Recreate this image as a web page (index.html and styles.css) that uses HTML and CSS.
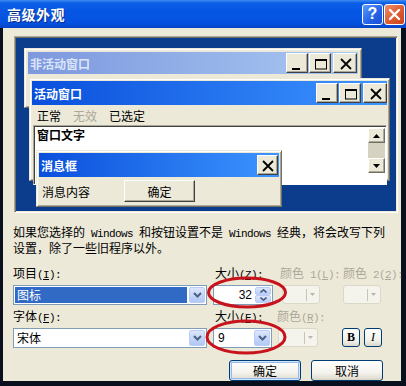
FILE: index.html
```html
<!DOCTYPE html>
<html lang="zh-CN">
<head>
<meta charset="utf-8">
<title>高级外观</title>
<link rel="stylesheet" href="styles.css">
</head>
<body>
<div class="win">
  <div class="titlebar">
    <span class="title">高级外观</span>
    <div class="tb-btns">
      <span class="tb-btn help">?</span>
      <span class="tb-btn close"><svg width="13" height="13" viewBox="0 0 13 13"><path d="M2 2L11 11M11 2L2 11" stroke="#fff" stroke-width="2.4" stroke-linecap="round"/></svg></span>
    </div>
  </div>
  <div class="client">
    <div class="preview">
      <div class="pwin inactive">
        <div class="cap">
          <span class="cap-t">非活动窗口</span>
          <div class="cbtns">
            <span class="cb"><svg width="12" height="12" viewBox="0 0 12 12"><rect x="0" y="10" width="8" height="2"/></svg></span>
            <span class="cb mx"><svg width="12" height="12" viewBox="0 0 12 12"><rect x="0.5" y="1.5" width="11" height="9.5" fill="none" stroke="#000"/><rect x="0" y="1" width="12" height="2"/></svg></span>
            <span class="cb cl"><svg width="12" height="12" viewBox="0 0 12 12"><path d="M1 1L11 11M11 1L1 11" stroke="#000" stroke-width="1.8"/></svg></span>
          </div>
        </div>
      </div>
      <div class="pwin active">
        <div class="cap">
          <span class="cap-t">活动窗口</span>
          <div class="cbtns">
            <span class="cb"><svg width="12" height="12" viewBox="0 0 12 12"><rect x="0" y="10" width="8" height="2"/></svg></span>
            <span class="cb mx"><svg width="12" height="12" viewBox="0 0 12 12"><rect x="0.5" y="1.5" width="11" height="9.5" fill="none" stroke="#000"/><rect x="0" y="1" width="12" height="2"/></svg></span>
            <span class="cb cl"><svg width="12" height="12" viewBox="0 0 12 12"><path d="M1 1L11 11M11 1L1 11" stroke="#000" stroke-width="1.8"/></svg></span>
          </div>
        </div>
        <div class="menu">
          <span>正常</span><span class="dis">无效</span><span>已选定</span>
        </div>
        <div class="textarea">
          <div class="wtext">窗口文字</div>
          <div class="sbar">
            <span class="sb-btn"><svg width="7" height="4" viewBox="0 0 7 4"><path d="M3.5 0L7 4H0Z"/></svg></span>
            <span class="sb-thumb"></span>
            <span class="sb-btn"><svg width="7" height="4" viewBox="0 0 7 4"><path d="M0 0H7L3.5 4Z"/></svg></span>
          </div>
        </div>
      </div>
      <div class="pwin msgbox">
        <div class="cap">
          <span class="cap-t">消息框</span>
          <div class="cbtns">
            <span class="cb cl"><svg width="12" height="12" viewBox="0 0 12 12"><path d="M1 1L11 11M11 1L1 11" stroke="#000" stroke-width="1.8"/></svg></span>
          </div>
        </div>
        <div class="msgbody">
          <span>消息内容</span>
          <span class="okbtn">确定</span>
        </div>
      </div>
    </div>

    <p class="note">如果您选择的<span class="m"> Windows </span>和按钮设置不是<span class="m"> Windows </span>经典，将会改写下列<br>设置，除了一些旧程序以外。</p>

    <div class="opts">
      <span class="lbl">项目<span class="m">(<u>I</u>):</span></span>
      <span class="lbl l2">大小<span class="m">(<u>Z</u>):</span></span>
      <span class="lbl dim">颜色<span class="m"> 1(<u>L</u>):</span></span>
      <span class="lbl dim">颜色<span class="m"> 2(<u>2</u>):</span></span>

      <div class="combo big">
        <span class="val sel">图标</span>
        <span class="dd"><svg width="9" height="6" viewBox="0 0 9 6"><path d="M1 1L4.5 4.5L8 1" fill="none" stroke="#4d6185" stroke-width="2"/></svg></span>
      </div>
      <div class="combo spin">
        <span class="val num">32</span>
        <span class="ud">
          <span class="udb"><svg width="7" height="4" viewBox="0 0 7 4"><path d="M0.5 3.5L3.5 0.8L6.5 3.5" fill="none" stroke="#4d6185" stroke-width="1.6"/></svg></span>
          <span class="udb"><svg width="7" height="4" viewBox="0 0 7 4"><path d="M0.5 0.5L3.5 3.2L6.5 0.5" fill="none" stroke="#4d6185" stroke-width="1.6"/></svg></span>
        </span>
      </div>
      <div class="cbtn c1"><span class="sep"></span><svg width="5" height="3" viewBox="0 0 5 3"><path d="M0 0H5L2.5 3Z" fill="#b9b6a8"/></svg></div>
      <div class="cbtn"><span class="sep"></span><svg width="5" height="3" viewBox="0 0 5 3"><path d="M0 0H5L2.5 3Z" fill="#b9b6a8"/></svg></div>

      <span class="lbl">字体<span class="m">(<u>F</u>):</span></span>
      <span class="lbl l2">大小<span class="m">(<u>E</u>):</span></span>
      <span class="lbl dim l3">颜色<span class="m">(<u>R</u>):</span></span>
      <span></span>

      <div class="combo big">
        <span class="val">宋体</span>
        <span class="dd"><svg width="9" height="6" viewBox="0 0 9 6"><path d="M1 1L4.5 4.5L8 1" fill="none" stroke="#4d6185" stroke-width="2"/></svg></span>
      </div>
      <div class="combo small">
        <span class="val">9</span>
        <span class="dd"><svg width="9" height="6" viewBox="0 0 9 6"><path d="M1 1L4.5 4.5L8 1" fill="none" stroke="#4d6185" stroke-width="2"/></svg></span>
      </div>
      <div class="cbtn c3"><span class="sep"></span><svg width="5" height="3" viewBox="0 0 5 3"><path d="M0 0H5L2.5 3Z" fill="#b9b6a8"/></svg></div>
      <div class="fbtns">
        <span class="fbtn b">B</span>
        <span class="fbtn i">I</span>
      </div>
    </div>

    <div class="actions">
      <span class="xpbtn def">确定</span>
      <span class="xpbtn">取消</span>
    </div>

    <svg class="marks" width="398" height="353" viewBox="0 0 398 353">
      <ellipse cx="244" cy="264.5" rx="38.5" ry="14.5" fill="none" stroke="#c8121c" stroke-width="3"/>
      <ellipse cx="243" cy="309" rx="39" ry="16" fill="none" stroke="#c8121c" stroke-width="3"/>
    </svg>
  </div>
</div>
</body>
</html>
```

FILE: styles.css
```css
* { box-sizing: border-box; }
html, body { margin: 0; padding: 0; }
body {
  width: 406px;
  height: 386px;
  overflow: hidden;
  background: #0a0f1e;
  font: 12px/13px "Noto Sans CJK SC", "Liberation Sans", sans-serif;
  color: #000;
}
.m {
  font-family: "Liberation Mono", monospace;
  font-size: 11px;
  letter-spacing: -0.6px;
  white-space: pre;
}
.win { width: 406px; height: 386px; display: flex; flex-direction: column; }

/* title bar */
.titlebar {
  height: 28px;
  flex: none;
  display: flex;
  align-items: center;
  padding-left: 7px;
  background: linear-gradient(180deg, #3f8cf3 0, #0c5fe6 3px, #0656e4 40%, #0552e0 80%, #0744c6 100%);
}
.title {
  color: #fff;
  font-weight: bold;
  font-size: 14px;
  letter-spacing: 0.5px;
  text-shadow: 1px 1px 0 #0a2d8a;
}
.tb-btns { margin-left: auto; display: flex; gap: 1px; padding-right: 1px; }
.tb-btn {
  width: 21px; height: 21px;
  border: 1px solid #fff;
  border-radius: 3px;
  display: flex; align-items: center; justify-content: center;
  color: #fff;
  font: bold 16px/1 "Liberation Sans", sans-serif;
}
.tb-btn.help { background: linear-gradient(135deg, #5d9cf8, #2460e6 60%, #1d4fd0); }
.tb-btn.close { background: linear-gradient(135deg, #f0906c, #dd5a2e 55%, #c8411c); }

/* client */
.client {
  position: relative;
  flex: 1;
  background: #ece9d8;
  border-left: 3px solid #0a0f1e;
  border-right: 5px solid #0a0f1e;
  border-bottom: 5px solid #0a0f1e;
}

/* preview */
.preview {
  position: relative;
  margin: 8px 0 0 11px;
  width: 384px;
  height: 177px;
  background: #0b3d8c;
  border: 1px solid;
  border-color: #aca899 #fff #fff #aca899;
  box-shadow: inset 1px 1px 0 #716f64, inset -1px -1px 0 #ece9d8;
}
.pwin {
  position: absolute;
  background: #ece9d8;
  border: 1px solid;
  border-color: #ece9d8 #716f64 #716f64 #ece9d8;
  box-shadow: inset 1px 1px 0 #fff, inset -1px -1px 0 #aca899;
  padding: 2px;
}
.inactive { left: 9px; top: 11px; width: 338px; height: 60px; padding: 3px; }
.active { left: 14px; top: 41px; width: 361px; height: 103px; }
.msgbox { left: 21px; top: 113px; width: 246px; height: 57px; }

.cap {
  display: flex;
  align-items: center;
  padding-left: 2px;
  background: linear-gradient(90deg, #0a4fdc, #3d95ff);
  height: 24px;
}
.inactive .cap { height: 22px; padding-right: 1px; background: linear-gradient(90deg, #7d98de, #a9c8f2); }
.cap-t { color: #fff; font-weight: bold; font-size: 12px; }
.inactive .cap-t { color: #dbe5f7; }
.cbtns { margin-left: auto; display: flex; }
.cb {
  width: 22px; height: 20px;
  background: #ece9d8;
  border: 1px solid;
  border-color: #fff #404040 #404040 #fff;
  box-shadow: inset -1px -1px 0 #aca899;
  display: flex; align-items: center; justify-content: center;
  padding-left: 1px; padding-top: 1px;
}
.cb + .cb { margin-left: 1px; }
.cb.cl { width: 24px; }
.cb + .cb.cl { margin-left: 2px; }
.msgbox .cb.cl { width: 21px; margin-right: 1px; }

.menu {
  height: 20px;
  display: flex;
  align-items: center;
  gap: 12px;
  padding-left: 5px;
}
.menu .dis { color: #aca899; }
.textarea {
  display: flex;
  height: 60px;
  margin-left: 1px;
  background: #fff;
  border: 1px solid;
  border-color: #aca899 #fff #fff #aca899;
  box-shadow: inset 1px 1px 0 #404040;
  padding: 2px 1px 0 3px;
}
.wtext { flex: 1; font-weight: bold; font-size: 12px; }
.sbar { width: 17px; display: flex; flex-direction: column; align-self: flex-start; }
.sb-btn {
  height: 15px;
  background: #ece9d8;
  border: 1px solid;
  border-color: #fff #716f64 #716f64 #fff;
  box-shadow: inset -1px -1px 0 #aca899;
  display: flex; align-items: center; justify-content: center;
}
.sb-thumb { height: 15px; background: #d6d2c2; }

.msgbody {
  display: flex;
  align-items: center;
  height: 28px;
  padding-left: 3px;
}
.okbtn {
  margin-left: 34px;
  width: 71px; height: 22px;
  background: #ece9d8;
  border: 1px solid;
  border-color: #fff #404040 #404040 #fff;
  box-shadow: inset -1px -1px 0 #aca899;
  display: flex; align-items: center; justify-content: center;
}

/* note */
.note {
  margin: 12px 0 0 10px;
  line-height: 13px;
  white-space: nowrap;
}

/* options grid */
.opts {
  margin-top: 12px;
  padding-left: 10px;
  display: grid;
  grid-template-columns: 200px 67px 63px 1fr;
  grid-template-rows: 19px 24px 19px 20px;
  align-items: start;
}
.lbl { line-height: 13px; white-space: nowrap; }
.lbl.l2 { margin-left: 2px; }
.lbl.l3 { margin-left: -3px; }
.dim { color: #aca899; }

.combo {
  height: 20px;
  border: 1px solid #7f9db9;
  background: #fff;
  display: flex;
  align-items: center;
  padding: 1px;
}
.combo.big { width: 194px; }
.combo.spin { width: 60px; }
.combo.small { width: 59px; }
.val { flex: 1; height: 16px; line-height: 16px; padding-left: 2px; }
.sel { background: #316ac5; color: #fff; margin-right: 2px; }
.num { text-align: right; padding-right: 3px; font-family: "Liberation Sans", sans-serif; }
.small .val { font-family: "Liberation Sans", sans-serif; padding-left: 3px; }
.dd {
  width: 16px; height: 16px;
  border: 1px solid #b9cdf6;
  border-radius: 2px;
  background: linear-gradient(180deg, #dde7fc, #c0d3f8 60%, #b2c8f4);
  display: flex; align-items: center; justify-content: center;
}
.ud { width: 16px; height: 16px; display: flex; flex-direction: column; gap: 0; }
.udb {
  flex: 1;
  border: 1px solid #b9cdf6;
  border-radius: 2px;
  background: linear-gradient(180deg, #dde7fc, #b9cdf6);
  display: flex; align-items: center; justify-content: center;
}
.cbtn {
  width: 38px; height: 19px;
  margin-left: 2px;
  border: 1px solid #dcd8c8;
  border-radius: 3px;
  background: #f4f3ec;
  display: flex; align-items: center; justify-content: flex-end;
  gap: 3px;
  padding-right: 4px;
}
.cbtn.c1 { margin-left: 2px; }
.cbtn.c3 { margin-left: -2px; width: 40px; }
.opts > .cbtn:nth-child(8) { margin-left: 0; }
.sep { width: 1px; height: 12px; background: #c9c6b7; }
.fbtns { display: flex; gap: 4px; margin-left: -1px; }
.fbtn {
  width: 18px; height: 19px;
  border: 1px solid #003c74;
  border-radius: 3px;
  background: linear-gradient(180deg, #ffffff, #f1efe6 70%, #dcd8c9);
  display: flex; align-items: center; justify-content: center;
  font-family: "Liberation Serif", serif;
  font-size: 12px;
}
.fbtn.b { font-weight: bold; }
.fbtn.i { font-style: italic; }

/* actions */
.actions {
  margin-top: 12px;
  display: flex;
  justify-content: flex-end;
  gap: 10px;
  padding-right: 18px;
}
.xpbtn {
  width: 72px; height: 21px;
  border: 1px solid #003c74;
  border-radius: 3px;
  background: linear-gradient(180deg, #ffffff, #f4f3ee 60%, #e3e0d3 90%, #d6d0c0);
  display: flex; align-items: center; justify-content: center;
}
.xpbtn.def { box-shadow: inset 0 0 0 1px #cee7ff, inset 0 0 0 2px #98b8ea; }

.marks { position: absolute; left: 0; top: 0; pointer-events: none; }
```
